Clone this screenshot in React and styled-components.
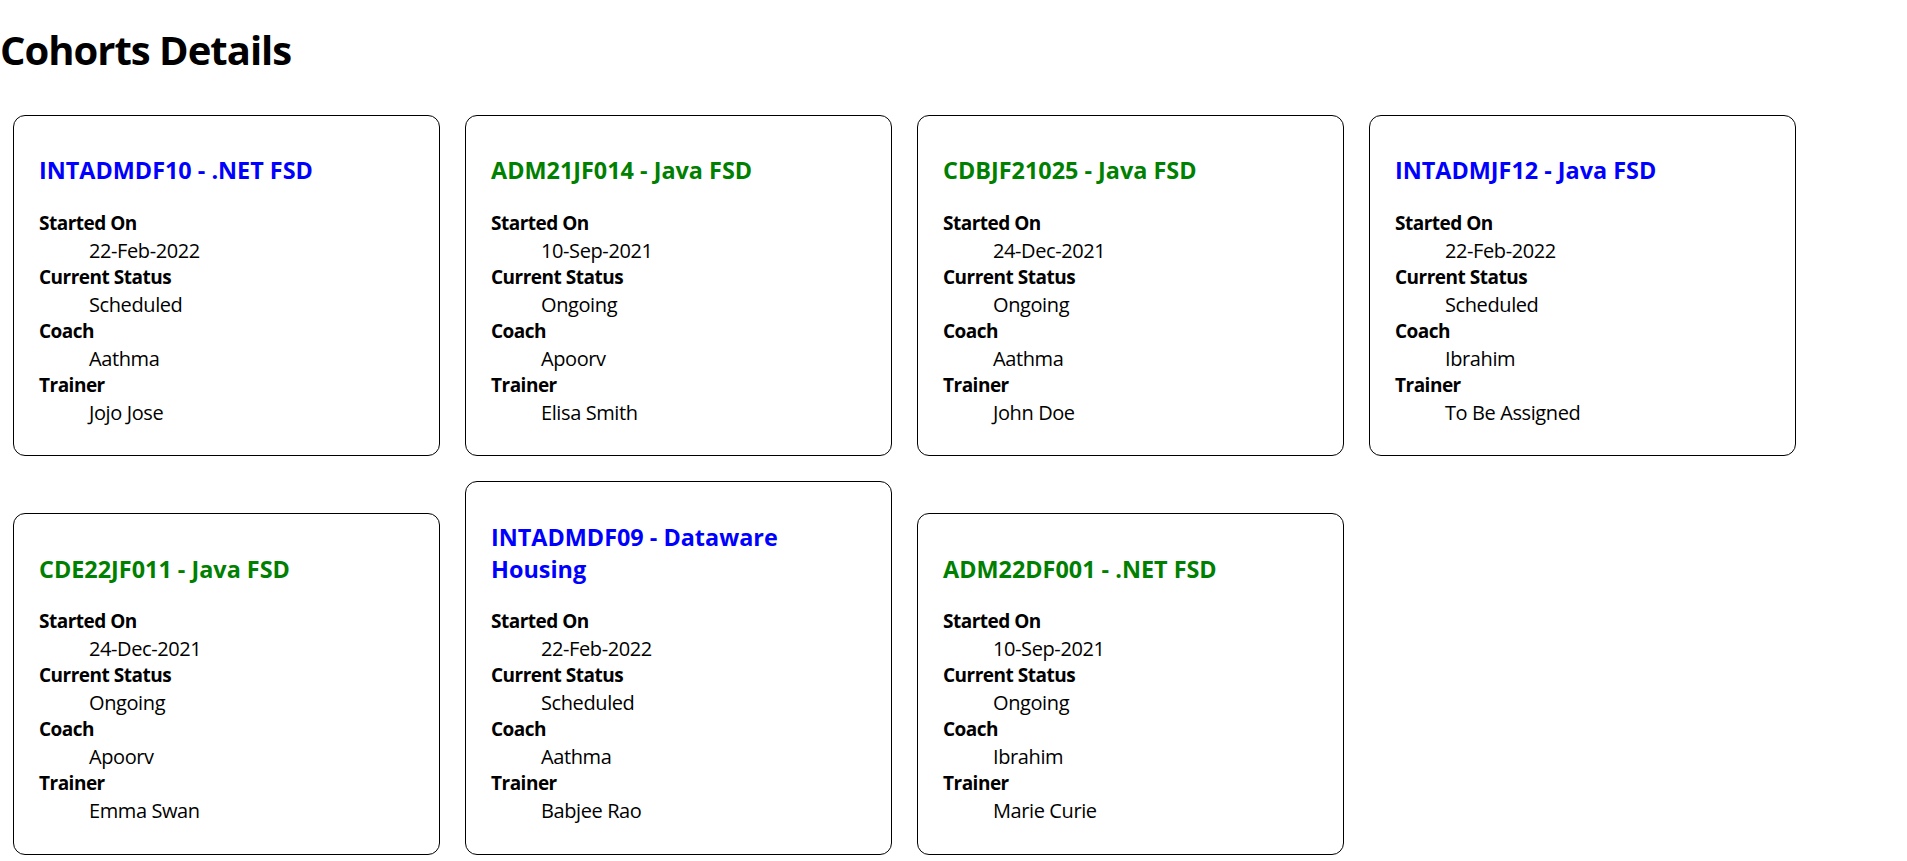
import React from 'react';
import styled, { createGlobalStyle } from 'styled-components';

const GlobalStyle = createGlobalStyle`
  body {
    margin: 0;
    background: #fff;
    color: #000;
    font-family: "Open Sans", "Noto Sans", sans-serif;
  }
`;

const Heading = styled.h1`
  margin: 23px 0 0;
  font-size: 40px;
  line-height: 53px;
  font-weight: 700;
  letter-spacing: -1px;
`;

const CardGrid = styled.div`
  display: flex;
  flex-wrap: wrap;
  align-items: flex-end;
  column-gap: 25px;
  row-gap: 25px;
  padding: 39px 13px 8px;
`;

const Card = styled.div`
  box-sizing: border-box;
  width: 427px;
  padding: 15px 25px 9.5px;
  border: 1px solid #000;
  border-radius: 12px;
`;

const CohortTitle = styled.h3`
  margin: 23.4px 0;
  font-size: 23.4px;
  line-height: 32px;
  font-weight: 700;
  color: ${(p) => (p.$status === 'Ongoing' ? '#008000' : '#0000ff')};
`;

const Details = styled.dl`
  margin: 0 0 20px;
  font-size: 20px;
  line-height: 27px;
`;

const Label = styled.dt`
  font-size: 19px;
  font-weight: 700;
  letter-spacing: -0.5px;
`;

const Value = styled.dd`
  margin-left: 50px;
  letter-spacing: -0.4px;
`;

const cohorts = [
  { code: 'INTADMDF10', technology: '.NET FSD', startDate: '22-Feb-2022', status: 'Scheduled', coach: 'Aathma', trainer: 'Jojo Jose' },
  { code: 'ADM21JF014', technology: 'Java FSD', startDate: '10-Sep-2021', status: 'Ongoing', coach: 'Apoorv', trainer: 'Elisa Smith' },
  { code: 'CDBJF21025', technology: 'Java FSD', startDate: '24-Dec-2021', status: 'Ongoing', coach: 'Aathma', trainer: 'John Doe' },
  { code: 'INTADMJF12', technology: 'Java FSD', startDate: '22-Feb-2022', status: 'Scheduled', coach: 'Ibrahim', trainer: 'To Be Assigned' },
  { code: 'CDE22JF011', technology: 'Java FSD', startDate: '24-Dec-2021', status: 'Ongoing', coach: 'Apoorv', trainer: 'Emma Swan' },
  { code: 'INTADMDF09', technology: 'Dataware Housing', startDate: '22-Feb-2022', status: 'Scheduled', coach: 'Aathma', trainer: 'Babjee Rao' },
  { code: 'ADM22DF001', technology: '.NET FSD', startDate: '10-Sep-2021', status: 'Ongoing', coach: 'Ibrahim', trainer: 'Marie Curie' },
];

const CohortCard = ({ cohort }) => (
  <Card>
    <CohortTitle $status={cohort.status}>
      {cohort.code} - {cohort.technology}
    </CohortTitle>
    <Details>
      <Label>Started On</Label>
      <Value>{cohort.startDate}</Value>
      <Label>Current Status</Label>
      <Value>{cohort.status}</Value>
      <Label>Coach</Label>
      <Value>{cohort.coach}</Value>
      <Label>Trainer</Label>
      <Value>{cohort.trainer}</Value>
    </Details>
  </Card>
);

const App = () => (
  <>
    <GlobalStyle />
    <Heading>Cohorts Details</Heading>
    <CardGrid>
      {cohorts.map((c) => (
        <CohortCard key={c.code} cohort={c} />
      ))}
    </CardGrid>
  </>
);

export default App;
